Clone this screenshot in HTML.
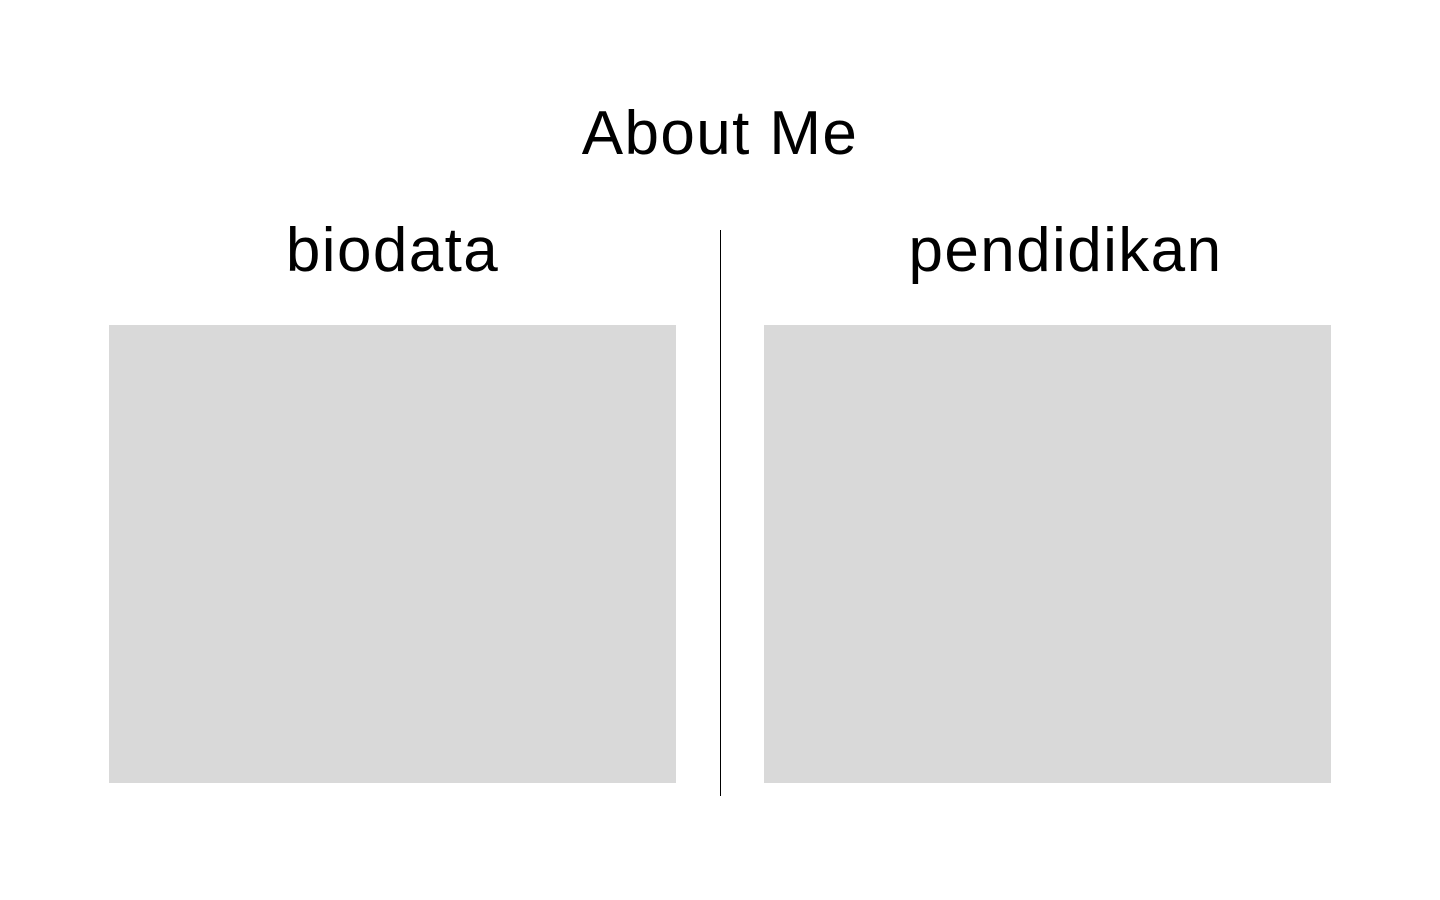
<!DOCTYPE html>
<html><head><style>
body{margin:0;width:1440px;height:900px;background:#fff;position:relative;font-family:"Liberation Sans",sans-serif;color:#000;overflow:hidden}
.t{position:absolute;white-space:nowrap;line-height:1;letter-spacing:1.4px}
.box{position:absolute;background:#d9d9d9;top:325px;width:567px;height:458px}
</style></head><body>
<div class="t" style="left:0;width:1440px;text-align:center;top:103px;font-size:62px">About Me</div>
<div class="t" style="left:109px;width:567px;text-align:center;top:220px;font-size:62px">biodata</div>
<div class="t" style="left:764px;width:603px;text-align:center;top:220px;font-size:62px">pendidikan</div>
<div class="box" style="left:109px"></div>
<div class="box" style="left:764px"></div>
<div style="position:absolute;left:720px;top:230px;width:1px;height:566px;background:#000"></div>
</body></html>
